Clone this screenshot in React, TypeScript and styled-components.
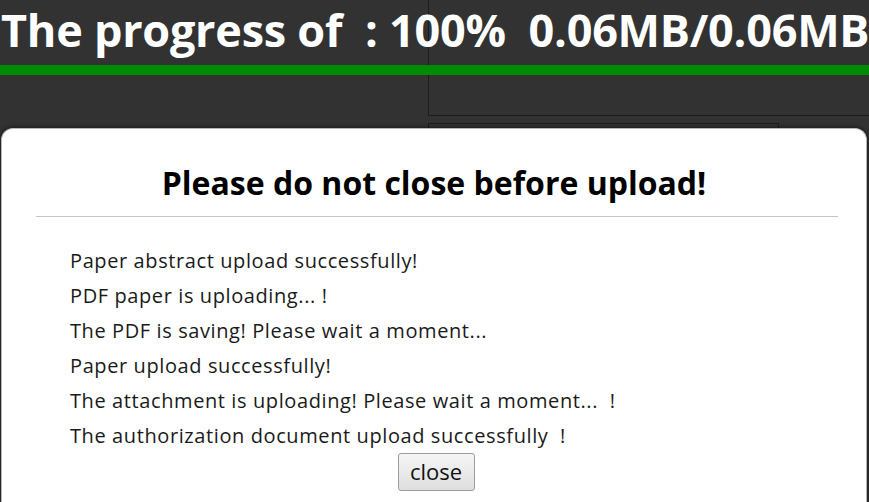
import React from "react";
import styled, { createGlobalStyle } from "styled-components";

const GlobalStyle = createGlobalStyle`
  html, body { margin: 0; padding: 0; background: #323232; overflow: hidden; }
  * { box-sizing: border-box; }
`;

const Page = styled.div`
  width: 869px;
  height: 502px;
  display: grid;
  grid-template: 502px / 869px;
  overflow: hidden;
  background: #323232;
  font-family: "Open Sans", "Noto Sans", sans-serif;
`;

const Layer = styled.div<{ $z: number }>`
  grid-area: 1 / 1;
  z-index: ${(p) => p.$z};
  min-width: 0;
  min-height: 0;
`;

const Backdrop = styled(Layer)`
  display: grid;
  grid-template-columns: 428px 1fr;
`;

const BackColumn = styled.div`
  display: flex;
  flex-direction: column;
  gap: 7px;
`;

const TopPanel = styled.div`
  height: 116px;
  border-left: 1px solid #1c1c1c;
  border-bottom: 1px solid #1c1c1c;
`;

const LowerPanel = styled.div`
  width: 351px;
  height: 40px;
  border-left: 1px solid #1c1c1c;
  border-top: 1px solid #1c1c1c;
  border-right: 1px solid #1c1c1c;
`;

const Progress = styled(Layer)`
  display: flex;
  flex-direction: column;
`;

const ProgressText = styled.div`
  color: #ffffff;
  font-weight: 700;
  font-size: 45px;
  line-height: 56px;
  padding-left: 1px;
  white-space: pre;
  letter-spacing: -0.25px;
  margin-top: 2px;
`;

const ProgressBar = styled.div`
  height: 10px;
  margin-top: 7px;
  background: #008c00;
  width: 100%;
`;

const ModalLayer = styled(Layer)`
  padding-top: 128px;
  display: flex;
`;

const Modal = styled.div`
  flex: 1;
  margin: 0 2px 0 1px;
  background: #ffffff;
  border: 1px solid #b8b8b8;
  border-bottom: none;
  border-radius: 12px 12px 0 0;
  box-shadow: 0 0 4px 1px rgba(0, 0, 0, 0.45);
  display: flex;
  flex-direction: column;
`;

const Title = styled.h2`
  margin: 0;
  padding-top: 34px;
  text-align: center;
  font-size: 32px;
  line-height: 40px;
  font-weight: 700;
  color: #000000;
`;

const Divider = styled.hr`
  margin: 13px 28px 0 34px;
  border: none;
  border-top: 1px solid #c4c4c4;
  height: 0;
`;

const Messages = styled.ul`
  list-style: none;
  margin: 0;
  padding: 26px 0 0 68px;
  display: flex;
  flex-direction: column;
`;

const Message = styled.li`
  font-size: 20px;
  line-height: 35px;
  color: #1a1a1a;
  white-space: pre;
  letter-spacing: 0.6px;
`;

const ButtonRow = styled.div`
  display: flex;
  justify-content: center;
  padding-left: 4px;
`;

const CloseButton = styled.button`
  width: 77px;
  height: 38px;
  font-family: "Open Sans", "Noto Sans", sans-serif;
  font-size: 22px;
  color: #111;
  background: linear-gradient(#f6f6f6, #dedede);
  border: 1px solid #9c9c9c;
  border-radius: 3px;
  padding: 0 0 3px;
  cursor: pointer;
`;

const messages = [
  "Paper abstract upload successfully!",
  "PDF paper is uploading... !",
  "The PDF is saving! Please wait a moment...",
  "Paper upload successfully!",
  "The attachment is uploading! Please wait a moment...  !",
  "The authorization document upload successfully  !",
];

export default function App() {
  return (
    <>
      <GlobalStyle />
      <Page>
        <Backdrop $z={0}>
          <div />
          <BackColumn>
            <TopPanel />
            <LowerPanel />
          </BackColumn>
        </Backdrop>
        <Progress $z={1}>
          <ProgressText>{"The progress of  : 100%  0.06MB/0.06MB"}</ProgressText>
          <ProgressBar />
        </Progress>
        <ModalLayer $z={2}>
          <Modal>
            <Title>Please do not close before upload!</Title>
            <Divider />
            <Messages>
              {messages.map((m) => (
                <Message key={m}>{m}</Message>
              ))}
            </Messages>
            <ButtonRow>
              <CloseButton>close</CloseButton>
            </ButtonRow>
          </Modal>
        </ModalLayer>
      </Page>
    </>
  );
}
